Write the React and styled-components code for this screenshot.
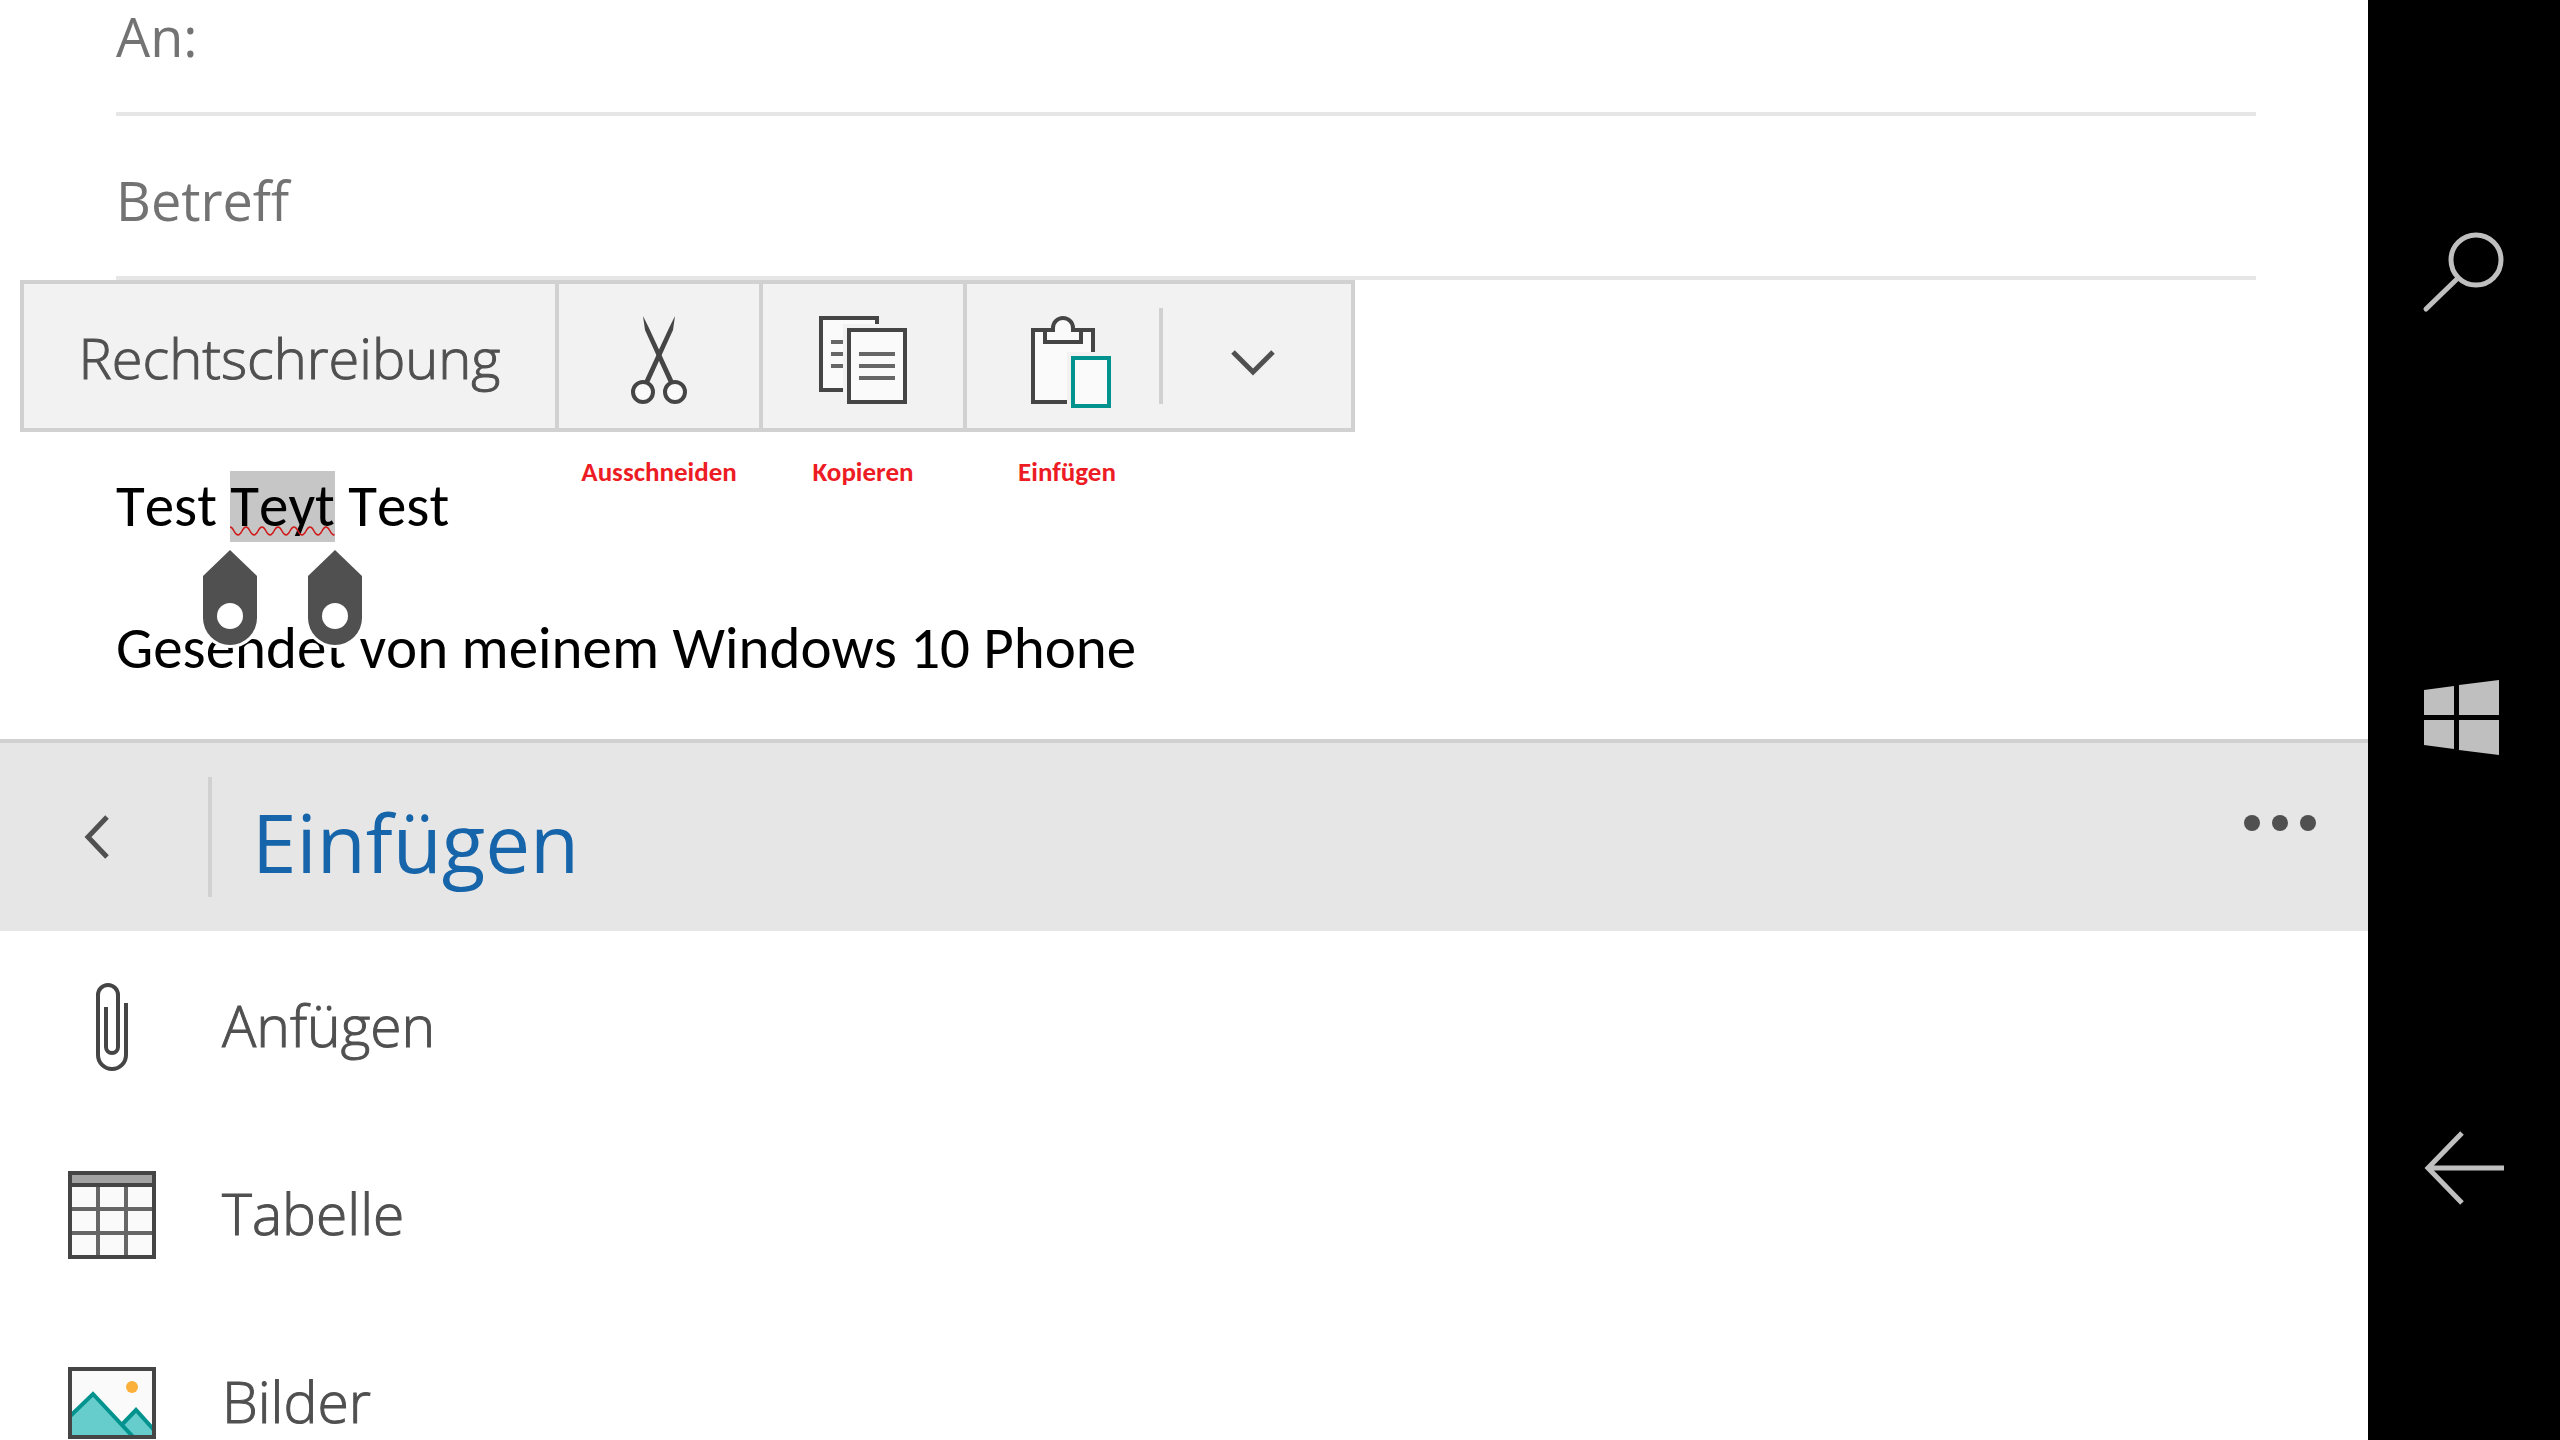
import React from "react";
import styled, { createGlobalStyle } from "styled-components";

const GlobalStyles = createGlobalStyle`
  * {
    box-sizing: border-box;
    margin: 0;
    padding: 0;
  }
  body {
    background-color: #ffffff;
    font-family: "Segoe UI", "Open Sans", sans-serif;
    overflow: hidden;
  }
  button {
    border: none;
    background: none;
    font: inherit;
    color: inherit;
    cursor: pointer;
  }
  svg {
    display: block;
    flex: none;
    overflow: visible;
  }
`;

const PhoneStyles = styled.div`
  display: flex;
  height: 100vh;
  overflow: hidden;
`;

const MailStyles = styled.main`
  flex: 1;
  min-width: 0;
  overflow: hidden;
`;

/* the form is scrolled up a little, so the first field is cut at the top */
const ComposeStyles = styled.section`
  position: relative;
  margin-top: -48px;
  padding: 0 112px 55px 116px;
`;

const FieldStyles = styled.div`
  display: flex;
  align-items: center;
  height: 164px;
  padding-top: 8px;
  border-bottom: 4px solid #e6e6e6;
  font-size: 54px;
  line-height: 72px;
  color: #737373;
  input {
    flex: 1;
    min-width: 0;
    border: none;
    outline: none;
    background: none;
    font: inherit;
    color: inherit;
  }
  input::placeholder {
    color: #737373;
    opacity: 1;
  }
`;

const MessageStyles = styled.div`
  padding-top: 191px;
  font-family: Calibri, Carlito, Lato, sans-serif;
  font-size: 59px;
  font-kerning: none;
  line-height: 71px;
  color: #000000;
  p {
    min-height: 71px;
  }
`;

const SelectionStyles = styled.span`
  position: relative;
  display: inline-block;
  background-color: #c6c6c6;
  .squiggle {
    position: absolute;
    left: 0;
    bottom: 4px;
    width: 100%;
    height: 12px;
  }
`;

const HandleStyles = styled.svg`
  position: absolute;
  top: 79px;
  ${(p) => p.$side}: -27px;
`;

/* floating edit menu above the selected word */
const EditMenuStyles = styled.div`
  position: absolute;
  top: 328px;
  left: 20px;
`;

const EditGrid = styled.div`
  display: grid;
  grid-template-columns: 531px 200px 200px 384px;
  gap: 4px;
  padding: 4px;
`;

const EditToolbar = styled(EditGrid)`
  height: 152px;
  background-color: #d1d1d1;
`;

const EditButton = styled.button`
  display: flex;
  justify-content: center;
  align-items: center;
  width: ${(p) => p.$width || "100%"};
  height: 144px;
  padding-top: ${(p) => p.$top || "8px"};
  background-color: #f2f2f2;
  color: #505050;
  font-size: 56px;
  font-weight: 300;
  -webkit-text-stroke: 1px #505050;
`;

const SplitStyles = styled.div`
  display: flex;
  align-items: center;
  background-color: #f2f2f2;
`;

const Divider = styled.span`
  flex: none;
  width: 4px;
  height: ${(p) => p.$height};
  background-color: #d1d1d1;
`;

const HintRow = styled(EditGrid)`
  padding-top: 24px;
  font-family: Calibri, Carlito, Lato, sans-serif;
  font-size: 27px;
  font-weight: 700;
  line-height: 32px;
  color: #ed1c24;
  text-align: center;
`;

const Hint = styled.span`
  grid-column: ${(p) => p.$column};
  width: ${(p) => p.$width || "auto"};
`;

const CommandBar = styled.header`
  display: flex;
  align-items: center;
  height: 192px;
  border-top: 4px solid #d1d1d1;
  background-color: #e6e6e6;
`;

const BackButton = styled.button`
  display: flex;
  justify-content: center;
  align-items: center;
  width: 208px;
  height: 188px;
  padding-right: 14px;
`;

const Title = styled.h1`
  flex: 1;
  padding: 10px 0 0 40px;
  font-size: 80px;
  font-weight: 400;
  line-height: 112px;
  color: #1664a9;
`;

const MoreButton = styled.button`
  display: flex;
  align-items: center;
  gap: 12px;
  height: 188px;
  padding: 0 52px 28px;
`;

const Dot = styled.span`
  width: 16px;
  height: 16px;
  border-radius: 50%;
  background-color: #505050;
`;

const InsertList = styled.ul`
  list-style: none;
  padding-top: 2px;
`;

const InsertButton = styled.button`
  display: flex;
  align-items: center;
  gap: 66px;
  width: 100%;
  height: 188px;
  padding-left: 68px;
  text-align: left;
  font-size: 57px;
  font-weight: 300;
  line-height: 80px;
  color: #505050;
  -webkit-text-stroke: 1px #505050;
  span {
    padding-bottom: 4px;
  }
`;

const NavBar = styled.nav`
  display: flex;
  flex-direction: column;
  justify-content: space-between;
  align-items: center;
  flex: none;
  width: 192px;
  padding: 224px 0 228px;
  background-color: #000000;
`;

const NavButton = styled.button`
  width: 80px;
  height: 88px;
`;

const CutIcon = () => (
  <svg width="56" height="88" viewBox="0 0 56 88">
    <path d="M12 0L18 12L43 66L38 67L14 14Z" fill="#454545" />
    <path d="M44 0L38 12L13 66L18 67L42 14Z" fill="#454545" />
    <g fill="#fafafa" stroke="#454545" strokeWidth="4">
      <circle cx="12" cy="76" r="10" />
      <circle cx="44" cy="76" r="10" />
    </g>
  </svg>
);

const CopyIcon = () => (
  <svg width="88" height="88" viewBox="0 0 88 88">
    <rect x="2" y="2" width="56" height="72" fill="#fafafa" stroke="#454545" strokeWidth="4" />
    <path d="M12 26H26M12 38H26M12 50H26" stroke="#666666" strokeWidth="4" />
    <rect x="24" y="8" width="64" height="80" fill="#f2f2f2" />
    <rect x="30" y="14" width="56" height="72" fill="#fafafa" stroke="#454545" strokeWidth="4" />
    <path d="M40 38H76M40 50H76M40 62H76" stroke="#666666" strokeWidth="4" />
  </svg>
);

const PasteIcon = () => (
  <svg width="64" height="88" viewBox="0 0 64 88">
    <g fill="#fafafa" stroke="#454545" strokeWidth="4">
      <rect x="2" y="14" width="60" height="72" />
      <path d="M14 14H22V12a10 10 0 0 1 20 0V14H50V26H14Z" />
    </g>
    <path d="M24 12H40V18H24Z" fill="#fafafa" />
    <rect x="36" y="36" width="44" height="56" fill="#f2f2f2" />
    <rect x="42" y="42" width="36" height="48" fill="#fafafa" stroke="#03938e" strokeWidth="4" />
  </svg>
);

const ChevronDownIcon = () => (
  <svg width="44" height="20" viewBox="0 0 44 20">
    <path d="M2 2L22 22L42 2" fill="none" stroke="#505050" strokeWidth="5" />
  </svg>
);

const ChevronLeftIcon = () => (
  <svg width="26" height="44" viewBox="0 0 26 44">
    <path d="M23 2L4 22L23 42" fill="none" stroke="#505050" strokeWidth="5" />
  </svg>
);

const ClipIcon = () => (
  <svg width="88" height="88" viewBox="0 0 88 88">
    <path
      d="M58 20V72a14 14 0 0 1-28 0V12a10 10 0 0 1 20 0V64a6 6 0 0 1-12 0V24"
      fill="none"
      stroke="#454545"
      strokeWidth="4"
    />
  </svg>
);

const TableIcon = () => (
  <svg width="88" height="88" viewBox="0 0 88 88">
    <rect x="2" y="2" width="84" height="84" fill="#fafafa" />
    <rect x="2" y="2" width="84" height="12" fill="#a3a3a3" />
    <path d="M30 14V86M58 14V86M2 38H86M2 62H86" stroke="#666666" strokeWidth="4" />
    <path d="M2 2H86V86H2ZM2 14H86" fill="none" stroke="#454545" strokeWidth="4" />
  </svg>
);

const PictureIcon = () => (
  <svg width="88" height="88" viewBox="0 0 88 88">
    <rect x="2" y="10" width="84" height="68" fill="#fafafa" />
    <circle cx="64" cy="28" r="6" fill="#fbb03b" />
    <clipPath id="frame">
      <rect x="2" y="10" width="84" height="68" />
    </clipPath>
    <g clipPath="url(#frame)" fill="#66cccc" stroke="#03938e" strokeWidth="4">
      <path d="M40 80L68 51L96 82V90H40Z" />
      <path d="M-6 65L25 35L68 81V90H-6Z" />
    </g>
    <rect x="2" y="10" width="84" height="68" fill="none" stroke="#454545" strokeWidth="4" />
  </svg>
);

const SearchIcon = () => (
  <svg width="80" height="88" viewBox="0 0 80 88" fill="none" stroke="#bfbfbf" strokeWidth="5">
    <circle cx="52" cy="36" r="25" />
    <path d="M34 54L2 85" strokeLinecap="round" />
  </svg>
);

const WindowsIcon = () => (
  <svg width="80" height="88" viewBox="0 0 80 88" fill="#bfbfbf">
    <path d="M0 16L30 12V41H0ZM35 11L75 6V41H35ZM0 46H30V75L0 71ZM35 46H75V81L35 76Z" />
  </svg>
);

const ArrowIcon = () => (
  <svg width="80" height="88" viewBox="0 0 80 88" fill="none" stroke="#bfbfbf" strokeWidth="5">
    <path d="M38 9L4 44L38 79M4 44H80" />
  </svg>
);

const Handle = ({ side }) => (
  <HandleStyles $side={side} width="54" height="95" viewBox="0 0 54 95">
    <path
      d="M27 0L54 26V68a27 27 0 0 1-54 0V26Z"
      fill="#505050"
      stroke="#ffffff"
      strokeWidth="6"
      paintOrder="stroke"
    />
    <circle cx="27" cy="66" r="13" fill="#ffffff" />
  </HandleStyles>
);

const Selection = ({ children }) => (
  <SelectionStyles>
    {children}
    <svg className="squiggle">
      <pattern id="wave" width="16" height="12" patternUnits="userSpaceOnUse">
        <path
          d="M0 1C4 1 4 9 8 9S12 1 16 1"
          fill="none"
          stroke="#d01818"
          strokeWidth="1.5"
        />
      </pattern>
      <rect width="100%" height="12" fill="url(#wave)" />
    </svg>
    <Handle side="left"></Handle>
    <Handle side="right"></Handle>
  </SelectionStyles>
);

const EditMenu = () => (
  <EditMenuStyles>
    <EditToolbar role="toolbar">
      <EditButton $top="2px">Rechtschreibung</EditButton>
      <EditButton aria-labelledby="hint-cut">
        <CutIcon />
      </EditButton>
      <EditButton aria-labelledby="hint-copy">
        <CopyIcon />
      </EditButton>
      <SplitStyles>
        <EditButton $width="192px" aria-labelledby="hint-paste">
          <PasteIcon />
        </EditButton>
        <Divider $height="96px" />
        <EditButton $width="180px" aria-label="Mehr">
          <ChevronDownIcon />
        </EditButton>
      </SplitStyles>
    </EditToolbar>
    <HintRow>
      <Hint id="hint-cut" $column="2">
        Ausschneiden
      </Hint>
      <Hint id="hint-copy" $column="3">
        Kopieren
      </Hint>
      <Hint id="hint-paste" $column="4" $width="200px">
        Einfügen
      </Hint>
    </HintRow>
  </EditMenuStyles>
);

const insertItems = [
  { label: "Anfügen", Icon: ClipIcon },
  { label: "Tabelle", Icon: TableIcon },
  { label: "Bilder", Icon: PictureIcon },
];

const navItems = [
  { label: "Suchen", Icon: SearchIcon },
  { label: "Start", Icon: WindowsIcon },
  { label: "Zurück", Icon: ArrowIcon },
];

const App = () => {
  return (
    <PhoneStyles>
      <GlobalStyles />
      <MailStyles>
        <ComposeStyles>
          <FieldStyles>
            <label htmlFor="to">An:</label>
            <input id="to" type="text" />
          </FieldStyles>
          <FieldStyles>
            <input type="text" placeholder="Betreff" aria-label="Betreff" />
          </FieldStyles>
          <MessageStyles>
            <p>
              Test <Selection>Teyt</Selection> Test
            </p>
            <p></p>
            <p>Gesendet von meinem Windows 10 Phone</p>
          </MessageStyles>
          <EditMenu />
        </ComposeStyles>
        <CommandBar>
          <BackButton aria-label="Zurück">
            <ChevronLeftIcon />
          </BackButton>
          <Divider $height="120px" />
          <Title>Einfügen</Title>
          <MoreButton aria-label="Mehr">
            <Dot />
            <Dot />
            <Dot />
          </MoreButton>
        </CommandBar>
        <InsertList>
          {insertItems.map(({ label, Icon }) => (
            <li key={label}>
              <InsertButton>
                <Icon />
                <span>{label}</span>
              </InsertButton>
            </li>
          ))}
        </InsertList>
      </MailStyles>
      <NavBar>
        {navItems.map(({ label, Icon }) => (
          <NavButton key={label} aria-label={label}>
            <Icon />
          </NavButton>
        ))}
      </NavBar>
    </PhoneStyles>
  );
};

export default App;
